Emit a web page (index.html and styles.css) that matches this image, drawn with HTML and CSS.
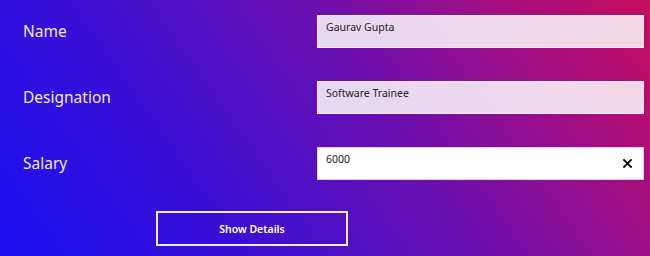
FILE: index.html
```
<!DOCTYPE html>
<html>

<head>
    <meta charset="UTF-8">
    <title>Employee</title>
    <link rel="stylesheet" href="styles.css">
</head>

<body>
    <div class="form">
        <label class="label" for="name">Name</label>
        <div class="field">
            <input type="text" id="name" value="Gaurav Gupta">
        </div>

        <label class="label" for="designation">Designation</label>
        <div class="field">
            <input type="text" id="designation" value="Software Trainee">
        </div>

        <label class="label" for="salary">Salary</label>
        <div class="field active">
            <input type="text" id="salary" value="6000">
            <span class="clear-button" id="clear-button">
                <svg viewBox="0 0 12 12" width="12" height="12">
                    <path d="M1.5 1.5 L10.5 10.5 M10.5 1.5 L1.5 10.5" stroke="#000" stroke-width="2" fill="none" />
                </svg>
            </span>
        </div>
    </div>
    <div class="actions">
        <button class="show-button" id="show-button">Show Details</button>
    </div>
    <script>
        const salaryInput = document.getElementById('salary');
        document.getElementById('clear-button').addEventListener('click', () => {
            salaryInput.value = '';
            salaryInput.focus();
        });
    </script>
</body>

</html>
```

FILE: styles.css
```
*:focus,
*:focus-visible {
    outline: none !important
}

body {
    margin: 0;
    width: 650px;
    height: 256px;
    overflow: hidden;
    background: linear-gradient(55deg, #1a10f2 0%, #3a0fd4 30%, #6a0fb0 58%, #a00e84 80%, #c40d5c 100%);
    font-family: "Noto Sans", "Open Sans", sans-serif;
    color: #f1e8f6;
}

.form {
    display: grid;
    grid-template-columns: 317px 327px;
    grid-auto-rows: 33px;
    row-gap: 33px;
    padding-top: 15px;
}

.label {
    display: flex;
    align-items: center;
    padding-left: 23px;
    font-size: 15.5px;
    padding-bottom: 2px;
}

.field {
    position: relative;
    display: flex;
    background-color: rgba(255, 255, 255, 0.84);
    border: 1px solid rgba(255, 255, 255, 0.5);
    box-sizing: border-box;
}

.field.active {
    background-color: #fff;
    border-color: #e8c8ef;
}

.field input {
    flex: 1;
    border: none;
    background: transparent;
    font-family: inherit;
    font-size: 10.5px;
    color: #222;
    padding: 0 8px 10px;
    margin: 0;
}

.clear-button {
    display: flex;
    align-items: center;
    padding: 0 10px 0 6px;
    cursor: pointer;
}

.clear-button svg {
    width: 11px;
    height: 11px;
}

.actions {
    padding: 0 0 0 156px;
    margin-top: 31px;
}

.show-button {
    width: 192px;
    height: 35px;
    background: transparent;
    border: 2px solid #f3e8f6;
    color: #fff;
    font-family: inherit;
    font-size: 10.5px;
    font-weight: 600;
    cursor: pointer;
}
```
